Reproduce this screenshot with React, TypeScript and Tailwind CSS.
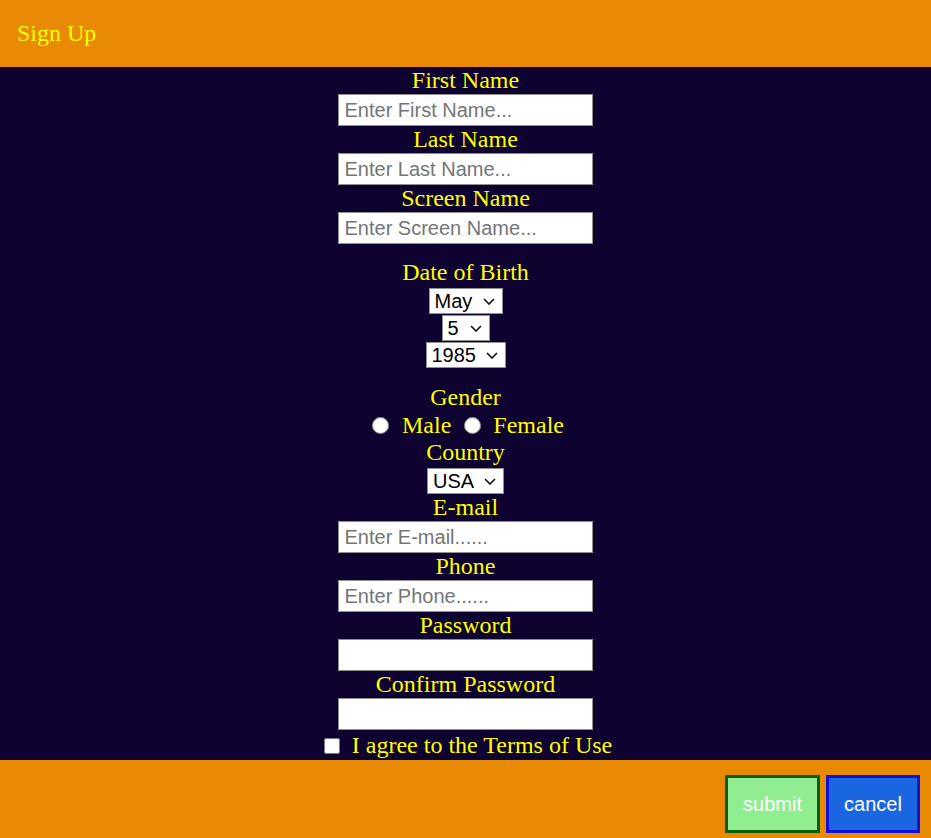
const serif = { fontFamily: '"Liberation Serif", "Times New Roman", serif' };

function Label({ children, tall }: { children: React.ReactNode; tall?: boolean }) {
  return (
    <div className={`${tall ? "h-[28px]" : "h-[27px]"} text-[24px] leading-[27px] text-[#ffff00]`}>{children}</div>
  );
}

function TextInput({ placeholder, type = "text" }: { placeholder?: string; type?: string }) {
  return (
    <input
      type={type}
      placeholder={placeholder}
      className="mr-[1px] h-[32px] w-[255px] border border-[#8f8f8f] bg-white px-[6px] font-['Liberation_Sans',Arial,sans-serif] text-[20px] text-black placeholder:text-[#757575] outline-none"
    />
  );
}

function Select({ options, value, width }: { options: string[]; value: string; width: string }) {
  return (
    <div className="relative flex">
      <select
        defaultValue={value}
        className={`h-[26px] ${width} appearance-none border border-[#8f8f8f] bg-white pl-[5px] font-['Liberation_Sans',Arial,sans-serif] text-[20px] leading-[24px] text-black`}
      >
        {options.map((o) => (
          <option key={o}>{o}</option>
        ))}
      </select>
      <svg
        className="pointer-events-none absolute right-[8px] top-[10px]"
        width="12"
        height="7"
        viewBox="0 0 12 7"
        fill="none"
        stroke="#111"
        strokeWidth="1.6"
      >
        <path d="M1 1l5 5 5-5" />
      </svg>
    </div>
  );
}

const months = ["January", "February", "March", "April", "May", "June", "July", "August", "September", "October", "November", "December"];

export default function App() {
  return (
    <div className="flex min-h-[838px] flex-col bg-[#0e0330]" style={serif}>
      {/* header */}
      <header className="flex h-[67px] items-center bg-[#e88a04] px-[17px]">
        <h1 className="text-[24px] leading-[27px] text-[#ffff00]">Sign Up</h1>
      </header>

      {/* form */}
      <main className="flex flex-1 flex-col items-center">
        <Label>First Name</Label>
        <TextInput placeholder="Enter First Name..." />
        <Label>Last Name</Label>
        <TextInput placeholder="Enter Last Name..." />
        <Label>Screen Name</Label>
        <TextInput placeholder="Enter Screen Name..." />

        <div className="mt-[15px]">
          <Label>Date of Birth</Label>
        </div>
        <div className="mt-[2px] flex flex-col items-center gap-[1px]">
          <Select options={months} value="May" width="w-[74px]" />
          <Select options={["1", "2", "3", "4", "5", "6", "7", "8", "9", "10"]} value="5" width="w-[48px]" />
          <Select options={["1983", "1984", "1985", "1986", "1987"]} value="1985" width="w-[80px]" />
        </div>

        <div className="mt-[16px]">
          <Label>Gender</Label>
        </div>
        <div className="flex h-[28px] items-center pl-[5px] text-[24px] leading-[27px] text-[#ffff00]">
          <input type="radio" name="gender" className="mr-[13px] h-[17px] w-[17px]" />
          <span>Male</span>
          <input type="radio" name="gender" className="ml-[13px] mr-[12px] h-[17px] w-[17px]" />
          <span>Female</span>
        </div>

        <Label tall>Country</Label>
        <div className="mt-[1px]">
          <Select options={["USA", "Canada", "Mexico"]} value="USA" width="w-[77px]" />
        </div>

        <Label>E-mail</Label>
        <TextInput placeholder="Enter E-mail......" />
        <Label>Phone</Label>
        <TextInput placeholder="Enter Phone......" />
        <Label>Password</Label>
        <TextInput type="password" />
        <Label>Confirm Password</Label>
        <TextInput type="password" />

        <div className="mt-[2px] flex h-[27px] items-center pl-[5px] text-[24px] leading-[27px] text-[#ffff00]">
          <input type="checkbox" className="mr-[12px] h-4 w-4" />
          <span>I agree to the Terms of Use</span>
        </div>
      </main>

      {/* footer */}
      <footer className="flex h-[78px] items-start justify-end gap-[6px] bg-[#e88a04] pr-[11px] pt-[15px]">
        <button className="h-[58px] w-[95px] border-[3px] border-[#0b5e0b] bg-[#90ee90] font-['Liberation_Sans',Arial,sans-serif] text-[20px] text-white">
          submit
        </button>
        <button className="h-[58px] w-[94px] border-[3px] border-[#1010d8] bg-[#1a66e0] font-['Liberation_Sans',Arial,sans-serif] text-[20px] text-white">
          cancel
        </button>
      </footer>
    </div>
  );
}
